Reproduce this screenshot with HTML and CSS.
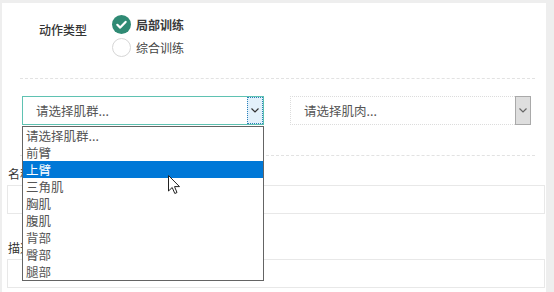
FILE: index.html
```html
<!DOCTYPE html>
<html lang="zh">
<head>
<meta charset="utf-8">
<link rel="stylesheet" href="styles.css">
</head>
<body>
<div class="panel">
  <div class="type-row">
    <div class="type-label">动作类型</div>
    <div class="radios">
      <div class="radio">
        <span class="dot checked">
          <svg width="19" height="19" viewBox="0 0 19 19"><circle cx="9.5" cy="9.5" r="9.5" fill="#2f8a74"/><path d="M5.3 9.8 L8.2 12.6 L13.6 6.9" fill="none" stroke="#fff" stroke-width="2.2" stroke-linecap="round" stroke-linejoin="round"/></svg>
        </span>
        <span class="radio-text strong">局部训练</span>
      </div>
      <div class="radio">
        <span class="dot"></span>
        <span class="radio-text">综合训练</span>
      </div>
    </div>
  </div>
  <div class="divider"></div>
  <div class="select-row">
    <div class="select focused">
      <span class="select-text">请选择肌群...</span>
      <span class="arrow arrow-focus"><svg width="8" height="5" viewBox="0 0 8 5"><path d="M0.5 0.5 L4 4 L7.5 0.5" fill="none" stroke="#333" stroke-width="1.2"/></svg></span>
    </div>
    <div class="select plain">
      <span class="select-text">请选择肌肉...</span>
      <span class="arrow arrow-gray"><svg width="8" height="5" viewBox="0 0 8 5"><path d="M0.5 0.5 L4 4 L7.5 0.5" fill="none" stroke="#666" stroke-width="1.2"/></svg></span>
    </div>
  </div>
  <div class="divider second"></div>
  <div class="field">
    <div class="field-label">名称</div>
    <div class="field-input"></div>
  </div>
  <div class="field">
    <div class="field-label">描述</div>
    <div class="field-input"></div>
  </div>
</div>

<ul class="dropdown">
  <li>请选择肌群...</li>
  <li>前臂</li>
  <li class="selected">上臂</li>
  <li>三角肌</li>
  <li>胸肌</li>
  <li>腹肌</li>
  <li>背部</li>
  <li>臀部</li>
  <li>腿部</li>
</ul>

<svg class="cursor" width="13" height="20" viewBox="0 0 13 20">
  <path d="M0.5 0.5 L0.5 16 L4.2 12.5 L6.8 18.5 L9 17.5 L6.5 11.6 L11.5 11.6 Z" fill="#fff" stroke="#222" stroke-width="1" stroke-linejoin="round"/>
</svg>
</body>
</html>
```

FILE: styles.css
```css
* { box-sizing: border-box; }
html, body { margin: 0; padding: 0; }
body {
  background: #eeeeee;
  font-family: "Noto Sans CJK SC", "Noto Sans", sans-serif;
  font-size: 12px;
  color: #333;
  width: 554px;
  height: 292px;
  overflow: hidden;
  position: relative;
}
.panel {
  margin: 3px 8px 0 2px;
  width: 544px;
  height: 300px;
  background: #fff;
  padding-top: 12px;
}
.type-row {
  display: flex;
  padding-left: 37px;
}
.type-label {
  width: 73px;
  padding-top: 6px;
  line-height: 18px;
  color: #333;
  font-weight: 500;
}
.radios {
  display: flex;
  flex-direction: column;
  gap: 4px;
}
.radio {
  display: flex;
  align-items: center;
  height: 19px;
  gap: 5px;
}
.dot {
  width: 19px;
  height: 19px;
  border-radius: 50%;
  border: 1px solid #d6d6d6;
  background: #fff;
  display: block;
}
.dot.checked { border: none; }
.dot svg { display: block; }
.radio-text { color: #444; line-height: 19px; }
.radio-text.strong { font-weight: 700; color: #3a3a3a; }
.divider {
  margin: 21px 11px 0 18px;
  border-top: 1px dashed #e2e2e2;
}
.divider.second { margin-top: 30px; }
.select-row {
  display: flex;
  gap: 26px;
  margin: 17px 0 0 20px;
}
.select {
  height: 29px;
  display: flex;
  align-items: center;
  background: #fff;
}
.select.focused {
  width: 242px;
  border: 1px solid #5fc2b2;
}
.select.plain {
  width: 241px;
  border: 1px dotted #dcdcdc;
}
.select-text {
  flex: 1;
  padding-left: 13px;
  color: #555;
  font-size: 12.5px;
}
.arrow {
  width: 16px;
  height: 27px;
  display: flex;
  align-items: center;
  justify-content: center;
}
.arrow-focus {
  background: #e3f1fb;
  border: 1px dotted #2b7fb8;
}
.arrow-gray {
  background: #dedede;
  border: 1px solid #a9a9a9;
}
.select.plain .arrow-gray { height: 29px; margin-right: -1px; }
.field {
  margin: 0 0 0 5px;
  width: 538px;
}
.field-label {
  height: 16px;
  margin-top: 10px;
  line-height: 16px;
  color: #333;
  padding-left: 1px;
}
.field + .field .field-label { margin-top: 26px; }
.field-input {
  margin-top: 3px;
  height: 29px;
  border: 1px solid #e8e8e8;
  background: #fff;
}
.dropdown {
  position: absolute;
  left: 22px;
  top: 126px;
  width: 242px;
  margin: 0;
  padding: 0;
  list-style: none;
  background: #fff;
  border: 1px solid #646464;
}
.dropdown li {
  height: 17px;
  line-height: 17px;
  padding-left: 3px;
  color: #555;
  font-size: 12.5px;
}
.dropdown li.selected {
  background: #0078d7;
  color: #fff;
}
.cursor {
  position: absolute;
  left: 168px;
  top: 175px;
}
```
